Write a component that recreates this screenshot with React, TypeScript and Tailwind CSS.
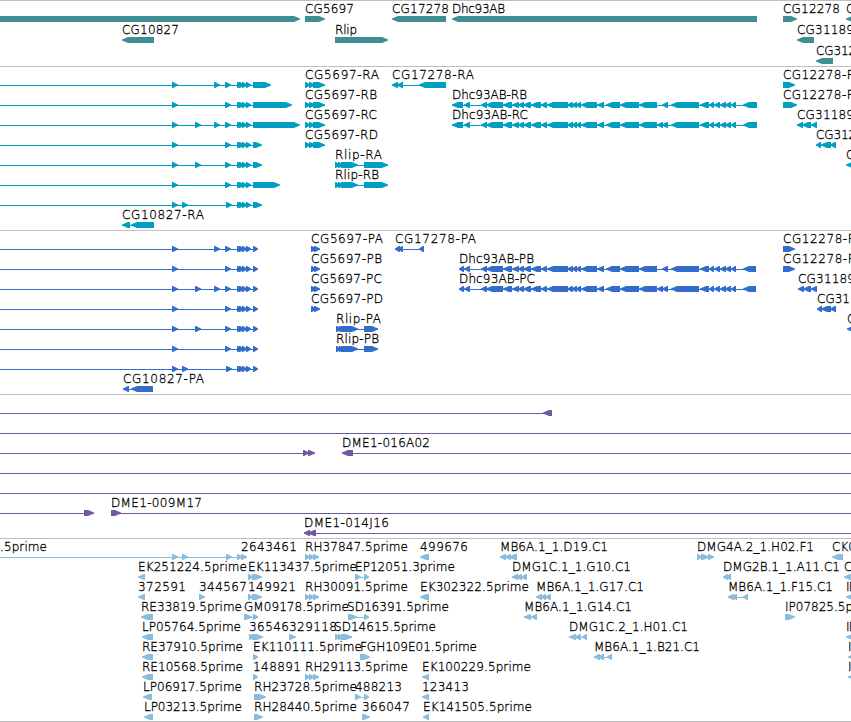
type Exon = [number, number];

interface Feature {
  row: number;
  dir: "fwd" | "rev";
  exons: Exon[];
  label?: string;
  // start and end of the label text
  at?: Exon;
  // extent of the connecting line, when it runs past the exons
  span?: Exon;
}

interface TrackData {
  name: string;
  color: string;
  height: number;
  pitch: number;
  features: Feature[];
}

const WIDTH = 851;

function fwd(row: number, exons: Exon[], label?: string, at?: Exon, span?: Exon): Feature {
  return { row, dir: "fwd", exons, label, at, span };
}

function rev(row: number, exons: Exon[], label?: string, at?: Exon, span?: Exon): Feature {
  return { row, dir: "rev", exons, label, at, span };
}

const genes: Feature[] = [
  fwd(0, [[-10, 300]]),
  rev(1, [[122, 154]], "CG10827", [122, 179]),
  fwd(0, [[305, 325]], "CG5697", [305, 354]),
  fwd(1, [[335, 388]], "Rlip", [335, 357]),
  rev(0, [[392, 446]], "CG17278", [392, 449]),
  rev(0, [[452, 757]], "Dhc93AB", [452, 505]),
  fwd(0, [[783, 797]], "CG12278", [783, 840]),
  rev(1, [[797, 814]], "CG31189", [797, 854]),
  rev(2, [[816, 833]], "CG312", [816, 856]),
  rev(0, [[846, 870]], "C", [846, 854]),
];

const cluster: Exon[] = [[237, 242], [239, 244], [242, 247], [246, 251]];

// leading exons of the seven long isoforms, top to bottom
const isoforms: number[][] = [
  [172, 214, 225],
  [172, 225],
  [172, 195, 214, 225],
  [172, 225],
  [172, 195, 225],
  [172, 225],
  [172, 182, 226],
];

function longIsoforms(ends: number[]): Feature[] {
  return isoforms.map((starts, row) =>
    fwd(
      row,
      [...starts.map((x): Exon => [x, x + 6]), ...cluster, [253, ends[row]]],
      undefined,
      undefined,
      [0, 253]
    )
  );
}

const dhcHead: Exon[] = [
  [481, 487], [486, 503], [503, 512], [512, 519], [518, 524], [523, 531], [531, 541],
  [541, 547], [547, 568], [567, 573], [572, 577], [576, 581], [581, 597], [597, 604],
  [606, 620], [620, 639], [639, 657],
];
const dhcTail: Exon[] = [
  [671, 699], [700, 709], [709, 714], [714, 720], [720, 726], [725, 731], [731, 736],
];

const transcripts: Feature[] = [
  ...longIsoforms([271, 292, 300, 262, 262, 280, 262]),
  rev(7, [[122, 130], [131, 154]], "CG10827-RA", [122, 204]),
  ...["A", "B", "C", "D"].map((s, i) =>
    fwd(i, [[305, 310], [309, 315], [313, 325]], "CG5697-R" + s, [305, [379, 377, 377, 378][i]])
  ),
  fwd(4, [[335, 340], [338, 343], [341, 358], [364, 388]], "Rlip-RA", [335, 382]),
  fwd(5, [[335, 340], [338, 343], [341, 358], [364, 388]], "Rlip-RB", [335, 379]),
  rev(0, [[392, 398], [397, 403], [419, 446]], "CG17278-RA", [392, 474]),
  rev(1, [[452, 463], [464, 470], ...dhcHead, [662, 668], ...dhcTail, [743, 757]], "Dhc93AB-RB", [452, 527]),
  rev(2, [[452, 463], [464, 470], ...dhcHead, [657, 663], [662, 668], ...dhcTail, [743, 757]], "Dhc93AB-RC", [452, 528]),
  fwd(0, [[783, 795]], "CG12278-R", [783, 855]),
  fwd(1, [[783, 797]], "CG12278-R", [783, 855]),
  rev(2, [[797, 803], [802, 811], [811, 817]], "CG31189", [797, 854]),
  rev(3, [[816, 821], [821, 831], [830, 836]], "CG312", [816, 856]),
  rev(4, [[846, 870]], "C", [846, 854]),
];

const proteins: Feature[] = [
  ...longIsoforms([258, 258, 258, 258, 258, 258, 258]),
  rev(7, [[123, 129], [131, 153]], "CG10827-PA", [123, 204]),
  ...["A", "B", "C", "D"].map((s, i) =>
    fwd(i, [[311, 316], [314, 320]], "CG5697-P" + s, [311, [383, 382, 382, 383][i]])
  ),
  fwd(4, [[336, 341], [339, 343], [341, 358], [364, 378]], "Rlip-PA", [336, 381]),
  fwd(5, [[336, 341], [339, 343], [341, 358], [364, 378]], "Rlip-PB", [336, 379]),
  rev(0, [[395, 400], [398, 403], [419, 424]], "CG17278-PA", [395, 476]),
  rev(1, [[459, 464], [464, 470], ...dhcHead, [662, 668], ...dhcTail, [743, 756]], "Dhc93AB-PB", [459, 534]),
  rev(2, [[459, 464], [464, 470], ...dhcHead, [657, 663], [662, 668], ...dhcTail, [743, 756]], "Dhc93AB-PC", [459, 535]),
  fwd(0, [[783, 795]], "CG12278-P", [783, 855]),
  fwd(1, [[783, 795]], "CG12278-P", [783, 855]),
  rev(2, [[798, 804], [803, 811], [811, 817]], "CG31189", [798, 855]),
  rev(3, [[817, 822], [821, 831], [830, 836]], "CG31", [817, 850]),
  rev(4, [[847, 870]], "C", [847, 855]),
];

const clones: Feature[] = [
  rev(0, [[543, 552]], undefined, undefined, [0, 552]),
  fwd(1, [], undefined, undefined, [0, WIDTH]),
  fwd(2, [[303, 309], [308, 315]], undefined, undefined, [0, 315]),
  rev(2, [[342, 353]], "DME1-016A02", [342, 430], [342, WIDTH]),
  fwd(3, [], undefined, undefined, [0, WIDTH]),
  fwd(4, [], undefined, undefined, [0, WIDTH]),
  fwd(5, [[84, 94]], undefined, undefined, [0, 94]),
  fwd(5, [[111, 121]], "DME1-009M17", [111, 202], [111, WIDTH]),
  rev(6, [[304, 310], [308, 316]], "DME1-014J16", [304, 389], [304, WIDTH]),
];

const triple: Exon[] = [[305, 310], [309, 314], [313, 319]];

const ests: Feature[] = [
  fwd(0, [[172, 178], [182, 188], [226, 232]], ".5prime", [0, 47], [0, 240]),
  fwd(0, [[237, 242], [241, 247]], "2643461", [241, 297]),
  fwd(0, triple, "RH37847.5prime", [305, 408]),
  rev(0, [[420, 429]], "499676", [420, 468]),
  rev(0, [[500, 506], [505, 511], [509, 517]], "MB6A.1_1.D19.C1", [500, 608]),
  fwd(0, [[697, 702], [701, 709], [708, 714]], "DMG4A.2_1.H02.F1", [697, 814]),
  rev(0, [[832, 843]], "CK0", [832, 856]),

  rev(1, [[138, 145]], "EK251224.5prime", [138, 247]),
  fwd(1, [[248, 253], [252, 262]], "EK113437.5prime", [248, 357]),
  fwd(1, [[355, 361], [364, 369]], "EP12051.3prime", [355, 455]),
  rev(1, [[512, 518], [516, 522], [521, 527]], "DMG1C.1_1.G10.C1", [512, 631]),
  rev(1, [[723, 728], [726, 731]], "DMG2B.1_1.A11.C1", [723, 840]),
  rev(1, [[844, 870]], "C", [844, 852]),

  rev(2, [[138, 145]], "372591", [138, 186]),
  fwd(2, [[199, 205]], "344567", [199, 247]),
  fwd(2, [[248, 253], [252, 262]], "149921", [248, 296]),
  fwd(2, triple, "RH30091.5prime", [305, 408]),
  rev(2, [[420, 429]], "EK302322.5prime", [420, 529]),
  rev(2, [[536, 542], [541, 546], [545, 551]], "MB6A.1_1.G17.C1", [536, 644]),
  rev(2, [[728, 734], [732, 737], [743, 748]], "MB6A.1_1.F15.C1", [728, 833]),
  rev(2, [[846, 870]], "IP", [846, 856]),

  rev(3, [[141, 153]], "RE33819.5prime", [141, 242]),
  fwd(3, [[244, 252], [253, 258]], "GM09178.5prime", [244, 349]),
  fwd(3, [[348, 357], [364, 369]], "SD16391.5prime", [347, 449]),
  rev(3, [[524, 531], [531, 537]], "MB6A.1_1.G14.C1", [524, 632]),
  fwd(3, [[785, 795]], "IP07825.5p", [785, 853]),

  rev(4, [[142, 153]], "LP05764.5prime", [142, 241]),
  fwd(4, [[249, 254], [252, 263]], "36546", [249, 289]),
  fwd(4, [[289, 296]], "329118", [289, 337]),
  fwd(4, [[335, 340], [338, 343], [341, 352]], "SD14615.5prime", [334, 436]),
  rev(4, [[569, 576], [574, 581], [582, 587]], "DMG1C.2_1.H01.C1", [569, 688]),
  rev(4, [[846, 870]], "IP", [846, 856]),

  rev(5, [[142, 153]], "RE37910.5prime", [142, 243]),
  fwd(5, [[253, 258]], "EK110111.5prime", [253, 362]),
  fwd(5, [[360, 370]], "FGH109E01.5prime", [360, 477]),
  rev(5, [[594, 600], [598, 604], [607, 612]], "MB6A.1_1.B21.C1", [594, 700]),
  rev(5, [[848, 870]], "I", [848, 852]),

  rev(6, [[142, 153]], "RE10568.5prime", [142, 243]),
  fwd(6, [[253, 258]], "148891", [253, 301]),
  fwd(6, triple, "RH29113.5prime", [305, 408]),
  rev(6, [[422, 429]], "EK100229.5prime", [422, 531]),
  rev(6, [[848, 870]], "I", [848, 852]),

  rev(7, [[143, 152]], "LP06917.5prime", [143, 242]),
  fwd(7, [[254, 266]], "RH23728.5prime", [254, 357]),
  fwd(7, [[355, 361], [364, 369]], "488213", [355, 402]),
  rev(7, [[422, 429]], "123413", [422, 469]),

  rev(8, [[144, 153]], "LP03213.5prime", [144, 242]),
  fwd(8, [[254, 263]], "RH28440.5prime", [254, 357]),
  fwd(8, [[362, 370]], "366047", [362, 410]),
  rev(8, [[423, 429]], "EK141505.5prime", [423, 532]),
];

const tracks: TrackData[] = [
  { name: "genes", color: "#3f8e94", height: 65, pitch: 21, features: genes },
  { name: "transcripts", color: "#009fc2", height: 163, pitch: 20, features: transcripts },
  { name: "proteins", color: "#326dcd", height: 163, pitch: 20, features: proteins },
  { name: "clones", color: "#7357a5", height: 143, pitch: 20, features: clones },
  { name: "ests", color: "#8abcde", height: 182, pitch: 20, features: ests },
];

// block with a slightly blunt arrow head
function exonPoints([a, b]: Exon, y: number, dir: "fwd" | "rev") {
  const tip = Math.min(6, b - a - 1);
  if (dir === "fwd") {
    return `${a},${y} ${b - tip},${y} ${b},${y + 2.5} ${b},${y + 3.5} ${b - tip},${y + 6} ${a},${y + 6}`;
  }
  return `${b},${y} ${a + tip},${y} ${a},${y + 2.5} ${a},${y + 3.5} ${a + tip},${y + 6} ${b},${y + 6}`;
}

function Glyph({ feature, pitch }: { feature: Feature; pitch: number }) {
  const { row, dir, exons, label, at } = feature;
  const y = 15 + row * pitch;
  const [from, to] = feature.span ?? [exons[0][0], exons[exons.length - 1][1]];
  return (
    <g>
      {(feature.span || exons.length > 1) && (
        <rect x={from} y={y + 3} width={to - from} height={1} />
      )}
      {exons.map((exon, i) => (
        <polygon key={i} points={exonPoints(exon, y, dir)} />
      ))}
      {label && at && (
        <text
          x={at[0]}
          y={y - 3}
          textLength={at[1] - at[0]}
          className="fill-black stroke-black stroke-[0.3px]"
        >
          {label}
        </text>
      )}
    </g>
  );
}

function Track({ track }: { track: TrackData }) {
  return (
    <section className="border-t border-[#bebebe]">
      <svg
        width={WIDTH}
        height={track.height}
        fill={track.color}
        className="block font-['DejaVu_Sans',sans-serif] text-[12px] font-extralight"
      >
        {track.features.map((feature, i) => (
          <Glyph key={i} feature={feature} pitch={track.pitch} />
        ))}
      </svg>
    </section>
  );
}

export default function App() {
  return (
    <main className="w-[851px] overflow-hidden border-b border-[#bebebe] bg-white">
      {tracks.map((track) => (
        <Track key={track.name} track={track} />
      ))}
    </main>
  );
}
